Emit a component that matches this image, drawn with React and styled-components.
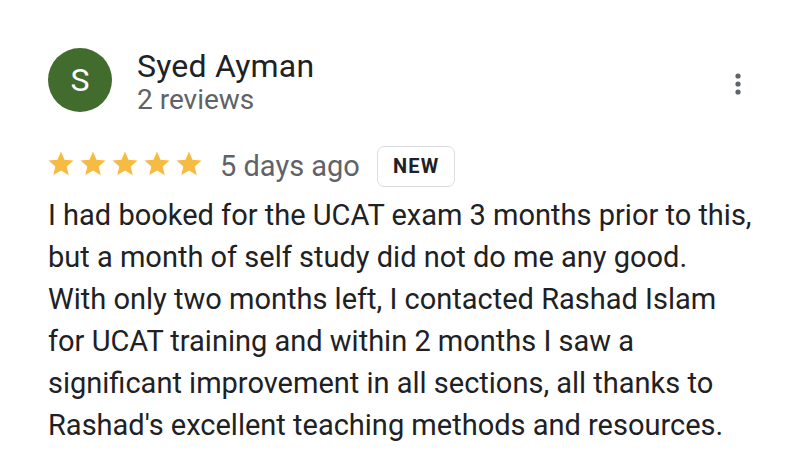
import React from 'react'
import styled, { createGlobalStyle } from 'styled-components'

const GlobalStyle = createGlobalStyle`
    body {
        margin: 0;
        background: #ffffff;
        font-family: Roboto, "Liberation Sans", sans-serif;
    }
`;

const Card = styled.div`
    width: 792px;
    height: 468px;
    box-sizing: border-box;
    padding: 48px 48px 0 48px;
    background: #ffffff;
    overflow: hidden;
`;

const Header = styled.div`
    display: flex;
    align-items: flex-start;
`;

const Avatar = styled.div`
    width: 64px;
    height: 64px;
    border-radius: 50%;
    background: ${props => props.color};
    color: #ffffff;
    display: flex;
    align-items: center;
    justify-content: center;
    font-size: 32px;
    flex-shrink: 0;
`;

const Who = styled.div`
    margin-left: 25px;
    flex: 1;
    display: flex;
    flex-direction: column;
`;

const Name = styled.div`
    font-size: 32px;
    line-height: 36px;
    letter-spacing: 0.2px;
    color: #202124;
`;

const Reviews = styled.div`
    font-size: 28px;
    line-height: 32px;
    color: #5f6368;
`;

const MoreButton = styled.div`
    width: 24px;
    height: 64px;
    display: flex;
    align-items: center;
    justify-content: center;
    margin-right: -6px;
    margin-top: 4px;
`;

const Meta = styled.div`
    display: flex;
    align-items: center;
    margin-top: 28px;
    height: 44px;
`;

const Stars = styled.div`
    display: flex;
    gap: 2px;
    margin-left: -2px;
    margin-bottom: 4px;
`;

const When = styled.span`
    margin-left: 16px;
    font-size: 29px;
    color: #5f6368;
`;

const Badge = styled.span`
    margin-left: 17px;
    height: 41px;
    padding: 0 15px;
    box-sizing: border-box;
    display: flex;
    align-items: center;
    border: 1.5px solid #dadce0;
    border-radius: 7px;
    font-size: 20px;
    font-weight: 700;
    letter-spacing: 1.2px;
    color: #202124;
`;

const Body = styled.p`
    margin: 6px 0 0 0;
    white-space: nowrap;
    font-size: 29px;
    line-height: 42px;
    color: #202124;
`;

const Star = () => (
    <svg width="30" height="30" viewBox="0 0 24 24">
        <path fill="#f6bb42" d="M12 17.27L18.18 21l-1.64-7.03L22 9.24l-7.19-.61L12 2 9.19 8.63 2 9.24l5.46 4.73L5.82 21z" />
    </svg>
);

const Dots = () => (
    <svg width="8" height="24" viewBox="0 0 8 24">
        <circle cx="4" cy="4" r="2.6" fill="#5f6368" />
        <circle cx="4" cy="12" r="2.6" fill="#5f6368" />
        <circle cx="4" cy="20" r="2.6" fill="#5f6368" />
    </svg>
);

const App = () => {
    return (
        <>
            <GlobalStyle />
            <Card>
                <Header>
                    <Avatar color="#426b2e">S</Avatar>
                    <Who>
                        <Name>Syed Ayman</Name>
                        <Reviews>2 reviews</Reviews>
                    </Who>
                    <MoreButton><Dots /></MoreButton>
                </Header>
                <Meta>
                    <Stars>
                        {[0, 1, 2, 3, 4].map(i => <Star key={i} />)}
                    </Stars>
                    <When>5 days ago</When>
                    <Badge>NEW</Badge>
                </Meta>
                <Body>
                    I had booked for the UCAT exam 3 months prior to this,<br />
                    but a month of self study did not do me any good.<br />
                    With only two months left, I contacted Rashad Islam<br />
                    for UCAT training and within 2 months I saw a<br />
                    significant improvement in all sections, all thanks to<br />
                    Rashad's excellent teaching methods and resources.
                </Body>
            </Card>
        </>
    )
}

export default App
